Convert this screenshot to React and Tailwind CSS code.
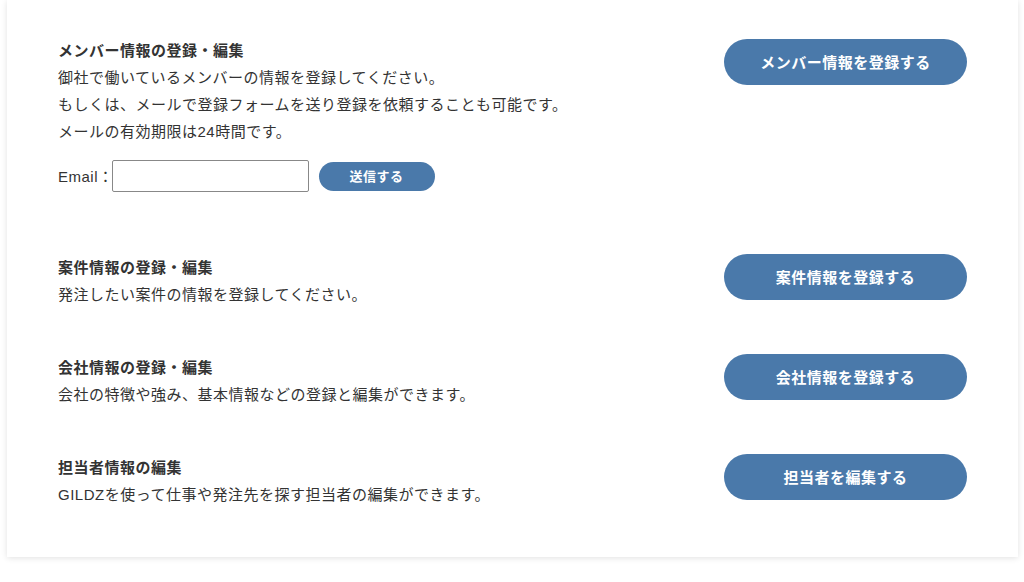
export default function App() {
  const rows = [
    {
      title: "案件情報の登録・編集",
      text: "発注したい案件の情報を登録してください。",
      button: "案件情報を登録する",
    },
    {
      title: "会社情報の登録・編集",
      text: "会社の特徴や強み、基本情報などの登録と編集ができます。",
      button: "会社情報を登録する",
    },
    {
      title: "担当者情報の編集",
      text: "GILDZを使って仕事や発注先を探す担当者の編集ができます。",
      button: "担当者を編集する",
    },
  ];

  return (
    <div
      className="min-h-screen bg-white"
      style={{ fontFamily: '"Liberation Sans", "Noto Sans CJK JP", sans-serif' }}
    >
      <div className="ml-[7px] mr-[6px] bg-white pt-[37px] pb-[49px] pl-[51px] pr-[51px] shadow-[0_1px_6px_rgba(0,0,0,0.12)] text-[#333] text-[15px] tracking-[0.5px] leading-[27px]">
        <div className="flex justify-between items-start pb-[62px]">
          <div>
            <h2 className="font-bold">メンバー情報の登録・編集</h2>
            <p>御社で働いているメンバーの情報を登録してください。</p>
            <p>もしくは、メールで登録フォームを送り登録を依頼することも可能です。</p>
            <p>メールの有効期限は24時間です。</p>
            <div className="flex items-center mt-[15px]">
              <label>Email：</label>
              <input
                type="text"
                className="w-[197px] h-[32px] border border-[#888] rounded-[2px] bg-white ml-[-2px]"
              />
              <button className="ml-[10px] w-[116px] h-[29px] rounded-full bg-[#4a79aa] text-white font-bold text-[13px]">
                送信する
              </button>
            </div>
          </div>
          <button className="mt-[2px] w-[243px] h-[46px] rounded-full bg-[#4a79aa] text-white font-bold text-[15px]">
            メンバー情報を登録する
          </button>
        </div>
        <div className="flex flex-col gap-[46px]">
          {rows.map((r) => (
            <div key={r.title} className="flex justify-between items-start">
              <div>
                <h2 className="font-bold">{r.title}</h2>
                <p>{r.text}</p>
              </div>
              <button className="w-[243px] h-[46px] rounded-full bg-[#4a79aa] text-white font-bold text-[15px]">
                {r.button}
              </button>
            </div>
          ))}
        </div>
      </div>
    </div>
  );
}
